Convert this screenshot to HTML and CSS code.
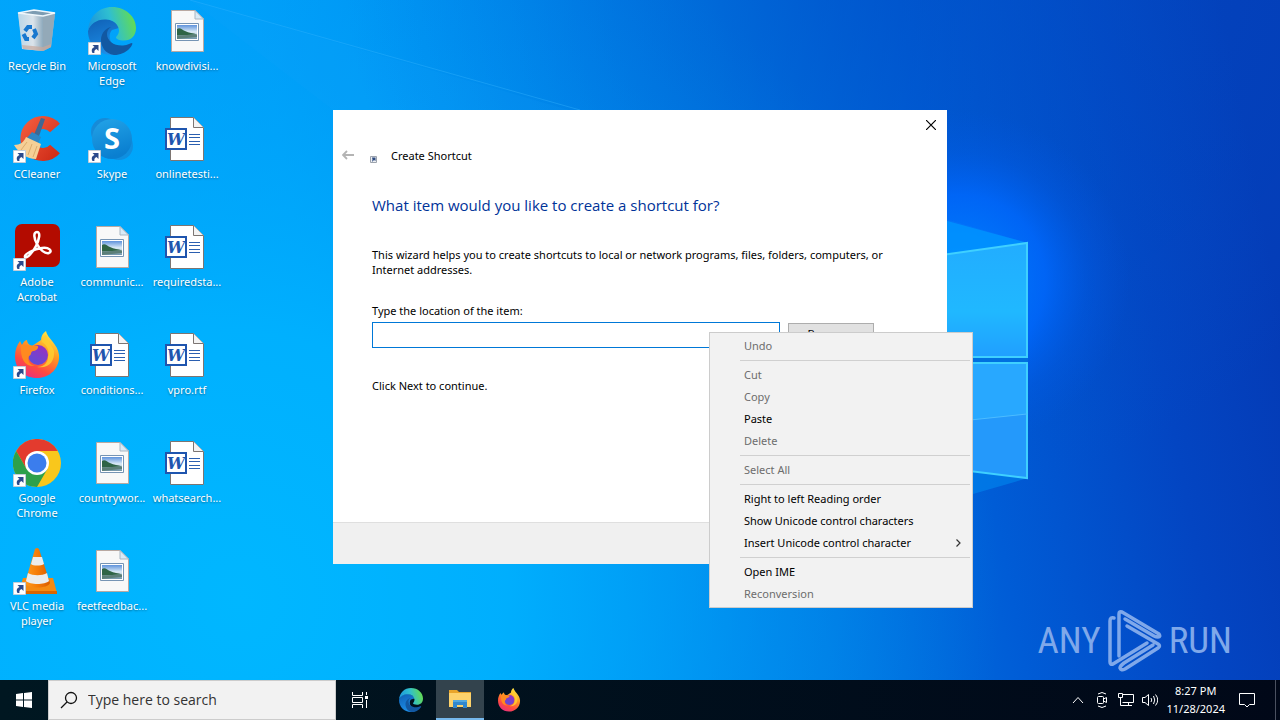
FILE: index.html
```html
<!DOCTYPE html>
<html lang="en">
  <head>
    <meta charset="UTF-8" />
    <meta name="viewport" content="width=device-width, initial-scale=1.0" />
    <link rel="stylesheet" href="styles.css">
    <title>Create Shortcut</title>
  </head>
  <body>
    <!-- shared icons -->
    <svg class="sprite" width="0" height="0" aria-hidden="true">
      <defs>
        <linearGradient id="edgeTop" x1="0" y1="0.6" x2="1" y2="0.4">
          <stop offset="0" stop-color="#1a93dd" />
          <stop offset="0.5" stop-color="#2fbfd0" />
          <stop offset="1" stop-color="#66dd4c" />
        </linearGradient>
        <linearGradient id="edgeLeft" x1="0" y1="0" x2="0.4" y2="1">
          <stop offset="0" stop-color="#0f5fb4" />
          <stop offset="1" stop-color="#1d8fe8" />
        </linearGradient>
        <linearGradient id="foxBody" x1="0.8" y1="0" x2="0.3" y2="1">
          <stop offset="0" stop-color="#fff04a" />
          <stop offset="0.4" stop-color="#ff9a22" />
          <stop offset="0.75" stop-color="#ff4a40" />
          <stop offset="1" stop-color="#e8307e" />
        </linearGradient>
        <linearGradient id="foxGlobe" x1="0.2" y1="1" x2="0.8" y2="0">
          <stop offset="0" stop-color="#5b4fd8" />
          <stop offset="1" stop-color="#9a2fc0" />
        </linearGradient>
        <linearGradient id="skypeFill" x1="0" y1="0" x2="0.3" y2="1">
          <stop offset="0" stop-color="#23a4e8" />
          <stop offset="1" stop-color="#0a7fd0" />
        </linearGradient>
        <linearGradient id="coneFill" x1="0" x2="1">
          <stop offset="0" stop-color="#ff9a1e" />
          <stop offset="0.5" stop-color="#f57c08" />
          <stop offset="1" stop-color="#d95c00" />
        </linearGradient>
        <linearGradient id="binFront" x1="0" x2="1">
          <stop offset="0" stop-color="#b9d6e8" />
          <stop offset="0.6" stop-color="#dbe3ea" />
          <stop offset="1" stop-color="#8eaabd" />
        </linearGradient>
        <linearGradient id="ccFill" x1="0" y1="0" x2="1" y2="1">
          <stop offset="0" stop-color="#f0583a" />
          <stop offset="1" stop-color="#d12f1a" />
        </linearGradient>
        <linearGradient id="photoSky" x1="0" y1="0" x2="0" y2="1">
          <stop offset="0" stop-color="#5f93dc" />
          <stop offset="0.5" stop-color="#dcebf6" />
          <stop offset="1" stop-color="#6f93a8" />
        </linearGradient>
      </defs>

      <symbol id="arrow" viewBox="0 0 48 48">
        <path d="M0.500 35.500h12v12h-12z" fill="#fff" stroke="#c3cdd8" />
        <path d="M4.500 38H10.500V44L8.500 42C6.500 43 6 44.500 6.500 46H4.500C3 43 4 41 6.500 40Z" fill="#2b4a8c" />
      </symbol>

      <symbol id="bin" viewBox="0 0 48 48">
        <path d="M5 6 21 3 42 6 38 40 30 44 10 42Z" fill="#a7c4d6" opacity="0.9" />
        <path d="M5 6 30 9 30 44 9 42Z" fill="url(#binFront)" />
        <path d="M30 9 42 6 38 40 30 44Z" fill="#93a9b8" />
        <path d="M5 6 21 3 42 6 30 9Z" fill="#7d9cb2" stroke="#eef6fb" stroke-width="1.500" />
        <path d="M9 38 30 40V44L10 42ZM30 40 38 37V40L30 44Z" fill="#c9a99c" opacity="0.700" />
        <g fill="none" stroke="#1878cf" stroke-width="4">
          <path d="M12 24 15 20H19" />
          <path d="M21 22 23 27 20 31" />
          <path d="M16 32H13L10.500 27" />
        </g>
      </symbol>

      <symbol id="edge" viewBox="0 0 48 48">
        <path d="M0 24C2 16 9 11 18 12C26 13 31 18 31 21L24 23C20 27 21 36 28 40C32 42 36 41 40 39C37 45 31 48 24 48C10 48 0 37 0 24Z" fill="url(#edgeLeft)" />
        <path d="M19 27C19 34 26 39 35 38.500C40 38 43 36 44 36C46 37 39 48 26 48C17 47 13 39 13 33C13 26 18 21 23 20C20 22 19 24 19 27Z" fill="#1258a2" />
        <path d="M0 24C1 9 11 0 24 0C38 0 48 10 48 21C48 29 43 33.500 36 33.500C31 33.500 28 32 28 30.500C28 29.500 31 28 31 23C30 17 26 13 18 12.500C9 12 2 17 0 24Z" fill="url(#edgeTop)" />
      </symbol>

      <symbol id="photo" viewBox="0 0 48 48">
        <path d="M8.500 3.500H32L40.500 12V44.500H8.500Z" fill="#f8f8f8" stroke="#b9a9a2" />
        <path d="M32 3.500V12H40.500Z" fill="#d9eaf6" stroke="#a9b6c2" />
        <path d="M12.500 16.500H35.500V33.500H12.500Z" fill="#fff" stroke="#7694b4" />
        <path d="M14 18H34V32H14Z" fill="url(#photoSky)" />
        <path d="M14 22C17 20 19 23 22 24C26 26 30 26 34 27.500L14 28.500Z" fill="#2f6446" />
        <path d="M14 28.500 34 27.500V30L14 32Z" fill="#5c7f78" />
      </symbol>

      <symbol id="word" viewBox="0 0 48 48">
        <path d="M7.500 2.500H30.500L40.500 12.500V45.500H7.500Z" fill="#fff" stroke="#7c7572" />
        <path d="M30.500 2.500V12.500H40.500" fill="#f3f3f3" stroke="#7c7572" />
        <path d="M3 14H23V34H3Z" fill="#fff" stroke="#1f55ae" stroke-width="2" />
        <path d="M26 19.500H37M26 22.500H37M26 26.500H37M26 29.500H37" stroke="#2b5fb0" />
      </symbol>

      <symbol id="firefox" viewBox="0 0 48 48">
        <path d="M28 9C28 5 30 2 33 0C34 7 45 13 46 24C47 37 37 47 24 47C11 47 2 38 2 25C2 19 4 14 7 10L9 14C10 12 12 9 14 9C14 12 16 14 19 15Z" fill="url(#foxBody)" />
        <circle cx="25" cy="24" r="10" fill="url(#foxGlobe)" />
        <path d="M8 14C14 13 19 15 25 15C26 18 22 20 20 20C17 21 19 24 16 25C14 30 17 34 22 35C12 36 7 28 8 14Z" fill="#ff8a20" />
        <path d="M29 11C34 14 37 20 35 26C35 33 29 36 24 36C36 38 42 30 41 20C39 14 35 11 33 4C30 6 29 8 29 11Z" fill="#ffce30" opacity="0.850" />
      </symbol>

      <symbol id="folder" viewBox="0 0 24 24">
        <path d="M1 3H9L11 5H23V20H1Z" fill="#e9a52a" />
        <path d="M1 6H23V20H1Z" fill="#fdd26b" />
        <path d="M5 21V13H19V21H15V18H9V21Z" fill="#3187cd" />
        <path d="M5 13H19V15H5Z" fill="#53a7dc" />
      </symbol>
    </svg>

    <main class="desktop">
      <svg class="wallpaper" viewBox="0 0 1280 680" preserveAspectRatio="none" aria-hidden="true">
        <defs>
          <linearGradient id="sky" x1="0" y1="0.550" x2="1" y2="0.450">
            <stop offset="0" stop-color="#00a8fd" />
            <stop offset="0.250" stop-color="#009ffa" />
            <stop offset="0.450" stop-color="#008cef" />
            <stop offset="0.600" stop-color="#0078e3" />
            <stop offset="0.750" stop-color="#005cd6" />
            <stop offset="0.900" stop-color="#0345c2" />
            <stop offset="1" stop-color="#043bb6" />
          </linearGradient>
          <radialGradient id="pool" gradientUnits="userSpaceOnUse" cx="240" cy="600" r="760">
            <stop offset="0" stop-color="#00b7ff" />
            <stop offset="0.350" stop-color="#00b3ff" stop-opacity="0.850" />
            <stop offset="0.700" stop-color="#00a4f8" stop-opacity="0.350" />
            <stop offset="1" stop-color="#009cf2" stop-opacity="0" />
          </radialGradient>
          <radialGradient id="shade" gradientUnits="userSpaceOnUse" cx="900" cy="-60" r="560">
            <stop offset="0" stop-color="#0050c6" stop-opacity="0.600" />
            <stop offset="0.500" stop-color="#0054ca" stop-opacity="0.300" />
            <stop offset="1" stop-color="#0058d0" stop-opacity="0" />
          </radialGradient>
          <radialGradient id="glow" gradientUnits="userSpaceOnUse" cx="960" cy="280" r="170">
            <stop offset="0" stop-color="#0084ff" />
            <stop offset="0.500" stop-color="#0069ff" stop-opacity="0.800" />
            <stop offset="0.750" stop-color="#0060f2" stop-opacity="0.300" />
            <stop offset="1" stop-color="#0058e8" stop-opacity="0" />
          </radialGradient>
          <linearGradient id="pane" x1="0" y1="0" x2="0" y2="1">
            <stop offset="0" stop-color="#22adff" />
            <stop offset="0.600" stop-color="#20b8ff" />
            <stop offset="1" stop-color="#209fff" />
          </linearGradient>
        </defs>
        <rect width="1280" height="680" fill="url(#sky)" />
        <rect width="1280" height="680" fill="url(#pool)" />
        <rect width="1280" height="680" fill="url(#shade)" />
        <rect width="1280" height="680" fill="url(#glow)" />
        <path d="M190 0 1028 243V360L333 110Z" fill="#1aa5ff" opacity="0.100" />
        <path d="M190 0 580 110" stroke="#35b4ff" opacity="0.400" />
        <path d="M940 219 1028 243 940 258Z" fill="#0095ff" opacity="0.800" />
        <path d="M1028 478 973 494V470Z" fill="#0087ee" opacity="0.600" />
        <path d="M800 275 1027 243V357H800Z" fill="url(#pane)" />
        <path d="M800 363H1027V478L800 450Z" fill="#2499fb" />
        <path d="M800 363H1027V414L800 438Z" fill="#28a8ff" />
        <path d="M800 357H1028V363H800Z" fill="#0070e0" />
        <path d="M800 275 1027 243V357H800M800 363H1027V478L800 450" fill="none" stroke="#3fd0ff" stroke-width="2" />
        <path d="M800 438 1027 414" stroke="#4cbcff" />
      </svg>

      <ul class="icons">
        <li class="icon">
          <svg viewBox="0 0 48 48"><use href="#bin" /></svg>
          <span>Recycle Bin</span>
        </li>
        <li class="icon">
          <svg viewBox="0 0 48 48">
            <path d="M42 13A16 16 0 1 0 42 34" fill="none" stroke="url(#ccFill)" stroke-width="13" />
            <path d="M28 3 32 4 25 24 20 22Z" fill="#3e6894" />
            <path d="M19 17 28 22 25 29 14 23Z" fill="#2e86c4" />
            <path d="M13 22 28 29 23 44C14 44 6 38 1 30C7 30 11 27 13 22Z" fill="#f5cf96" />
            <path d="M14 27 8 35M19 29 15 40M24 31 20 42" stroke="#dcab6c" />
            <use href="#arrow" />
          </svg>
          <span>CCleaner</span>
        </li>
        <li class="icon">
          <svg viewBox="0 0 48 48">
            <rect x="2" y="1" width="45" height="43" rx="7" fill="#b30b00" />
            <path d="M24 9C20 9 21 16 24 21C27 27 32 31 36 30C40 28 36 24 29 25C21 26 11 31 12 34C14 36 20 29 23 23C26 17 28 9 24 9Z" fill="none" stroke="#fff" stroke-width="2.500" />
            <use href="#arrow" />
          </svg>
          <span>Adobe Acrobat</span>
        </li>
        <li class="icon">
          <svg viewBox="0 0 48 48"><use href="#firefox" /><use href="#arrow" /></svg>
          <span>Firefox</span>
        </li>
        <li class="icon">
          <svg viewBox="0 0 48 48">
            <circle cx="24" cy="24" r="24" fill="#f9c71c" />
            <path d="M3.200 12A24 24 0 0 1 44.800 12H24L13.600 30Z" fill="#e33b2e" />
            <path d="M3.200 12A24 24 0 0 0 24 48L34.400 30H13.600Z" fill="#2da04b" />
            <circle cx="24" cy="24" r="12" fill="#fff" />
            <circle cx="24" cy="24" r="9.500" fill="#3b7ded" />
            <use href="#arrow" />
          </svg>
          <span>Google Chrome</span>
        </li>
        <li class="icon">
          <svg viewBox="0 0 48 48">
            <path d="M10 31H40L44 46H6Z" fill="#f58a12" />
            <path d="M6 44H44V47H6Z" fill="#d96500" />
            <path d="M22 2Q24 0 26 2L37 36C35 42 14 42 12 36Z" fill="url(#coneFill)" />
            <path d="M20 10H29L31 17C28 19 20 19 18 17ZM15 26C20 29 29 29 34 26L36 34C32 38 17 38 13 34Z" fill="#ececec" />
            <use href="#arrow" />
          </svg>
          <span>VLC media player</span>
        </li>
        <li class="icon">
          <svg viewBox="0 0 48 48"><use href="#edge" /><use href="#arrow" /></svg>
          <span>Microsoft Edge</span>
        </li>
        <li class="icon">
          <svg viewBox="0 0 48 48">
            <circle cx="17" cy="17" r="14" fill="#168bd8" />
            <circle cx="31" cy="31" r="14" fill="#0f8fe0" />
            <circle cx="24" cy="24" r="20" fill="url(#skypeFill)" />
            <text x="24" y="34" text-anchor="middle" class="skype-letter">S</text>
            <use href="#arrow" />
          </svg>
          <span>Skype</span>
        </li>
        <li class="icon">
          <svg viewBox="0 0 48 48"><use href="#photo" /></svg>
          <span>communic...</span>
        </li>
        <li class="icon">
          <svg viewBox="0 0 48 48"><use href="#word" /><text x="13" y="30" text-anchor="middle" class="word-letter">W</text></svg>
          <span>conditions...</span>
        </li>
        <li class="icon">
          <svg viewBox="0 0 48 48"><use href="#photo" /></svg>
          <span>countrywor...</span>
        </li>
        <li class="icon">
          <svg viewBox="0 0 48 48"><use href="#photo" /></svg>
          <span>feetfeedbac...</span>
        </li>
        <li class="icon">
          <svg viewBox="0 0 48 48"><use href="#photo" /></svg>
          <span>knowdivisi...</span>
        </li>
        <li class="icon">
          <svg viewBox="0 0 48 48"><use href="#word" /><text x="13" y="30" text-anchor="middle" class="word-letter">W</text></svg>
          <span>onlinetesti...</span>
        </li>
        <li class="icon">
          <svg viewBox="0 0 48 48"><use href="#word" /><text x="13" y="30" text-anchor="middle" class="word-letter">W</text></svg>
          <span>requiredsta...</span>
        </li>
        <li class="icon">
          <svg viewBox="0 0 48 48"><use href="#word" /><text x="13" y="30" text-anchor="middle" class="word-letter">W</text></svg>
          <span>vpro.rtf</span>
        </li>
        <li class="icon">
          <svg viewBox="0 0 48 48"><use href="#word" /><text x="13" y="30" text-anchor="middle" class="word-letter">W</text></svg>
          <span>whatsearch...</span>
        </li>
      </ul>

      <form class="dialog">
        <div class="dialog-top">
          <button type="button" class="close" aria-label="Close">
            <svg width="10" height="10" viewBox="0 0 10 10"><path d="M0 0 10 10M10 0 0 10" stroke="#000" stroke-width="1.200" /></svg>
          </button>
        </div>
        <div class="dialog-nav">
          <button type="button" class="back" aria-label="Back">
            <svg width="12" height="10" viewBox="0 0 12 10"><path d="M12 5H1M5 1 1 5 5 9" fill="none" stroke="#b4b4b4" stroke-width="1.800" /></svg>
          </button>
          <svg class="mini" width="16" height="16" viewBox="0 0 16 16">
            <path d="M4.500 9.500H10.500V15.500H4.500Z" fill="#eef0f3" stroke="#9da3ad" />
            <path d="M6 10.500H9.500V14L8 13 6 15 6.500 12.500Z" fill="#2c4a80" />
          </svg>
          <span>Create Shortcut</span>
        </div>
        <div class="dialog-body">
          <h1>What item would you like to create a shortcut for?</h1>
          <p>This wizard helps you to create shortcuts to local or network programs, files, folders, computers, or Internet addresses.</p>
          <label for="location">Type the location of the item:</label>
          <div class="field">
            <input type="text" id="location" />
            <button type="button" class="browse">Browse...</button>
          </div>
          <p>Click Next to continue.</p>
        </div>
        <div class="dialog-footer"></div>
      </form>

      <div class="menu">
        <button type="button" disabled>Undo</button>
        <hr />
        <button type="button" disabled>Cut</button>
        <button type="button" disabled>Copy</button>
        <button type="button">Paste</button>
        <button type="button" disabled>Delete</button>
        <hr />
        <button type="button" disabled>Select All</button>
        <hr />
        <button type="button">Right to left Reading order</button>
        <button type="button">Show Unicode control characters</button>
        <button type="button">
          Insert Unicode control character
          <svg width="5" height="8" viewBox="0 0 5 8"><path d="M0.500 0.500 4 4 0.500 7.500" fill="none" stroke="#333" stroke-width="1.200" /></svg>
        </button>
        <hr />
        <button type="button">Open IME</button>
        <button type="button" disabled>Reconversion</button>
      </div>

      <div class="watermark">
        <span>ANY</span>
        <svg width="56" height="64" viewBox="0 0 56 64" fill="none" stroke="currentColor" stroke-width="3.500" stroke-linejoin="round" stroke-linecap="round">
          <path d="M7 9Q3 8 3 12V53Q3 56 6 55L40 34" />
          <path d="M12 47V5Q12 2 15 3L52 25Q54 28 51 28Q49 28 47 27L18 10" />
          <path d="M20 17 51 35Q54 37 51 39L18 60Q14 62 13 59Q13 57 17 54L46 36" />
        </svg>
        <span>RUN</span>
      </div>
    </main>

    <footer class="taskbar">
      <button type="button" class="task" aria-label="Start">
        <svg width="16" height="16" viewBox="0 0 16 16"><path d="M0 2 7 1V7.500H0ZM8 1 16 0V7.500H8ZM0 8.500H7V15L0 14ZM8 8.500H16V16L8 15Z" fill="#fff" /></svg>
      </button>
      <label class="search">
        <svg width="18" height="18" viewBox="0 0 18 18"><circle cx="11" cy="7" r="5.500" fill="none" stroke="#111" stroke-width="1.300" /><path d="M7 11 1 17" stroke="#111" stroke-width="1.300" /></svg>
        <input type="text" placeholder="Type here to search" aria-label="Search" />
      </label>
      <button type="button" class="task" aria-label="Task View">
        <svg width="18" height="16" viewBox="0 0 18 16" fill="none" stroke="#fff"><path d="M1.500 0V3.500H11.500V0M1.500 16V12.500H11.500V16M1.500 5.500H11.500V10.500H1.500ZM15.500 0V3M15.500 8V16" /><path d="M14 4H17V7H14Z" fill="#fff" stroke="none" /></svg>
      </button>
      <div class="apps">
        <button type="button" class="task" aria-label="Microsoft Edge">
          <svg width="24" height="24" viewBox="0 0 48 48"><use href="#edge" /></svg>
        </button>
        <button type="button" class="task active" aria-label="File Explorer">
          <svg width="24" height="24" viewBox="0 0 24 24"><use href="#folder" /></svg>
        </button>
        <button type="button" class="task" aria-label="Firefox">
          <svg width="24" height="24" viewBox="0 0 48 48"><use href="#firefox" /></svg>
        </button>
      </div>
      <div class="tray">
        <svg width="16" height="16" viewBox="0 0 16 16"><path d="M3 11 8 5.500 13 11" /></svg>
        <svg width="16" height="16" viewBox="0 0 16 16"><rect x="3.500" y="4.500" width="6" height="7" rx="1" /><path d="M9.500 7 12.500 5.500V10.500L9.500 9M4 2Q8-1 12 2M4 14Q8 17 12 14" /></svg>
        <svg width="16" height="16" viewBox="0 0 16 16"><path d="M5 2.500H15.500V10.500H4.500M10.500 10.500V13.500M6 13.500H14M0.500 1.500H4.500V5.500H0.500ZM2.500 5.500V13.500H6" /></svg>
        <svg width="16" height="16" viewBox="0 0 16 16"><path d="M0.500 5.500H3L6.500 2.500V13.500L3 10.500H0.500ZM9 6Q10.500 8 9 10M11.500 4Q14 8 11.500 12M13.500 2.500Q18 8 13.500 13.500" /></svg>
        <div class="clock">8:27 PM<br />11/28/2024</div>
        <button type="button" class="notice" aria-label="Notifications">
          <svg width="16" height="16" viewBox="0 0 16 16"><path d="M0.500 1.500H15.500V12.500H10.500L8 15 5.500 12.500H0.500Z" /></svg>
        </button>
      </div>
    </footer>
  </body>
</html>
```

FILE: styles.css
```css
* {
  margin: 0;
  padding: 0;
  box-sizing: border-box;
}

body {
  display: flex;
  flex-direction: column;
  min-height: 100vh;
  font-family: "Noto Sans", "Open Sans", sans-serif;
  font-size: 11px;
  line-height: 15px;
  color: #000;
  overflow: hidden;
}

button,
input {
  font: inherit;
  color: inherit;
  border: 0;
  background: none;
}

.sprite {
  position: absolute;
}

/* Desktop */

.desktop {
  position: relative;
  flex: 1;
  overflow: hidden;
  background-color: #0090f0;
}

.wallpaper {
  position: absolute;
  width: 100%;
  height: 100%;
}

.icons {
  position: relative;
  display: grid;
  grid-auto-flow: column;
  grid-template-rows: repeat(6, 108px);
  grid-auto-columns: 74px;
  column-gap: 1px;
  padding-top: 7px;
  list-style: none;
}

.icon {
  display: flex;
  flex-direction: column;
  align-items: center;
  gap: 3px;
  color: #fff;
  text-align: center;
  text-shadow: 0 1px 2px rgba(0, 0, 0, 0.4);
}

.icon svg {
  width: 48px;
  height: 48px;
}

.word-letter {
  font: italic bold 16px "DejaVu Serif", serif;
  fill: #1f55ae;
  text-shadow: none;
}

.skype-letter {
  font: bold 29px "Open Sans", sans-serif;
  fill: #fff;
  text-shadow: none;
}

/* Create Shortcut wizard */

.dialog {
  position: absolute;
  top: 110px;
  left: 333px;
  width: 614px;
  background-color: #fff;
}

.dialog-top {
  display: flex;
  justify-content: flex-end;
}

.close {
  display: flex;
  align-items: center;
  justify-content: center;
  width: 32px;
  height: 30px;
}

.dialog-nav {
  display: flex;
  align-items: center;
  height: 30px;
  padding-left: 9px;
}

.back {
  display: flex;
  width: 12px;
}

.mini {
  margin: 0 9px 0 12px;
}

.dialog-body {
  display: flex;
  flex-direction: column;
  height: 352px;
  padding: 23px 39px 0;
}

.dialog-body h1 {
  margin-bottom: 30px;
  font-family: "Open Sans", sans-serif;
  font-size: 15px;
  font-weight: normal;
  line-height: 24px;
  color: #003399;
}

.dialog-body label {
  margin: 26px 0 4px;
}

.field {
  display: flex;
  align-items: center;
  gap: 8px;
  margin-bottom: 30px;
}

.field input {
  width: 408px;
  height: 26px;
  padding: 0 4px;
  border: 1px solid #0078d7;
}

.browse {
  width: 86px;
  height: 24px;
  padding-bottom: 3px;
  border: 1px solid #adadad;
  background-color: #e1e1e1;
}

.dialog-footer {
  height: 42px;
  border-top: 1px solid #dfdfdf;
  background-color: #f0f0f0;
}

/* Context menu */

.menu {
  position: absolute;
  top: 332px;
  left: 709px;
  display: flex;
  flex-direction: column;
  width: 264px;
  padding: 2px;
  border: 1px solid #ccc;
  background-color: #f2f2f2;
}

.menu button {
  display: flex;
  align-items: center;
  justify-content: space-between;
  height: 22px;
  padding: 0 9px 1px 32px;
  text-align: left;
}

.menu button:disabled {
  color: #6d6d6d;
}

.menu hr {
  margin: 3px 0 3px 28px;
  border: 0;
  border-top: 1px solid #d0d0d0;
}

.watermark {
  position: absolute;
  right: 48px;
  bottom: 7px;
  display: flex;
  align-items: center;
  gap: 6px;
  font-family: "Roboto Condensed", Roboto, sans-serif;
  font-size: 37px;
  line-height: 64px;
  color: #7fa8ea;
}

/* Taskbar */

.taskbar {
  display: flex;
  height: 40px;
  color: #fff;
  background: linear-gradient(to right, #001721, #010818);
}

.task {
  display: flex;
  align-items: center;
  justify-content: center;
  width: 48px;
}

.search {
  display: flex;
  align-items: center;
  gap: 10px;
  width: 288px;
  padding-left: 11px;
  border: 1px solid #ccc;
  background-color: #f2f2f2;
}

.search input {
  flex: 1;
  font-family: "Open Sans", sans-serif;
  font-size: 14px;
  line-height: 24px;
}

.search input::placeholder {
  color: #333;
}

.apps {
  display: flex;
  gap: 1px;
  margin-left: 3px;
}

.active {
  border-bottom: 2px solid #76b9ed;
  background-color: #33434d;
}

.tray {
  display: flex;
  align-items: center;
  gap: 8px;
  margin-left: auto;
  margin-right: 4px;
  padding-right: 20px;
  border-right: 1px solid #4b5160;
}

.tray svg {
  fill: none;
  stroke: #fff;
  display: block;
}

.clock {
  margin-right: 6px;
  line-height: 18px;
  text-align: center;
}
```
